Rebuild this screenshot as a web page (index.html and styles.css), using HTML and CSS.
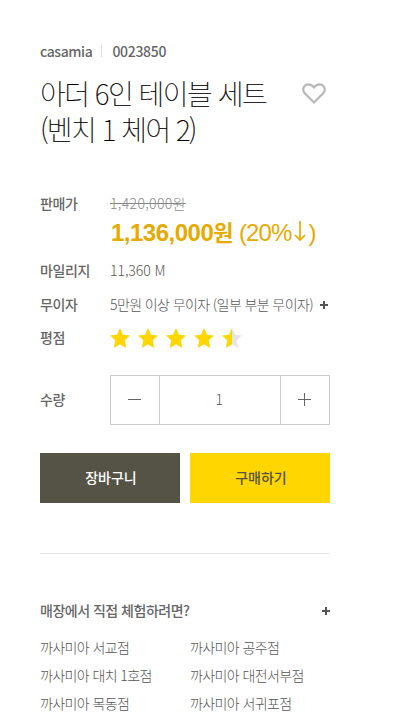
FILE: index.html
```html
<!DOCTYPE html>
<html lang="ko">
<head>
<meta charset="utf-8">
<title>casamia</title>
<link rel="stylesheet" href="styles.css">
</head>
<body>
<main class="product">
  <div class="meta"><span class="brand">casamia</span><span class="code">0023850</span></div>
  <header class="head">
    <h1>아더 6인 테이블 세트<br>(벤치 1 체어 2)</h1>
    <svg class="heart" width="24" height="22" viewBox="0 0 24 22"><path d="M12 19.500 3 10.600C-.6 6.600 1.900 1.300 6.500 1.300c2.300 0 4.100 1.200 5.500 3.100 1.400-1.900 3.200-3.100 5.500-3.100 4.600 0 7.100 5.300 3.500 9.300Z"/></svg>
  </header>
  <dl class="info">
    <div class="row price"><dt>판매가</dt><dd><del>1,420,000원</del><p class="sale"><b>1,136,000<span class="won">원</span></b> <span class="rate">(20%</span><svg width="12" height="22" viewBox="0 0 12 22"><path d="M6 1v19M1 15l5 5 5-5"/></svg><span class="rate">)</span></p></dd></div>
    <div class="row mileage"><dt>마일리지</dt><dd>11,360 M</dd></div>
    <div class="row free"><dt>무이자</dt><dd><span class="terms">5만원 이상 무이자 (일부 부분 무이자)</span><i class="plus"></i></dd></div>
    <div class="row rating"><dt>평점</dt><dd class="stars">
      <svg viewBox="0 0 20 20"><path d="m10 0 3 6.700 7 .7-5.200 4.900L16.200 20 10 16.200 3.800 20l1.400-7.700L0 7.400l7-.7z"/></svg>
      <svg viewBox="0 0 20 20"><path d="m10 0 3 6.700 7 .7-5.200 4.900L16.200 20 10 16.200 3.800 20l1.400-7.700L0 7.400l7-.7z"/></svg>
      <svg viewBox="0 0 20 20"><path d="m10 0 3 6.700 7 .7-5.200 4.900L16.200 20 10 16.200 3.800 20l1.400-7.700L0 7.400l7-.7z"/></svg>
      <svg viewBox="0 0 20 20"><path d="m10 0 3 6.700 7 .7-5.200 4.900L16.200 20 10 16.200 3.800 20l1.400-7.700L0 7.400l7-.7z"/></svg>
      <svg viewBox="0 0 20 20"><path class="off" d="m10 0 3 6.700 7 .7-5.200 4.900L16.200 20 10 16.200z"/><path d="M10 0v16.200L3.800 20l1.400-7.700L0 7.400l7-.7z"/></svg>
    </dd></div>
    <div class="row amount"><dt>수량</dt><dd class="stepper"><span class="step minus"></span><span class="count">1</span><span class="step add"></span></dd></div>
  </dl>
  <div class="buttons"><button class="cart">장바구니</button><button class="buy">구매하기</button></div>
  <section class="stores">
    <h2><span>매장에서 직접 체험하려면?</span><i class="plus"></i></h2>
    <ul>
      <li>까사미아 서교점</li><li>까사미아 공주점</li>
      <li>까사미아 대치 1호점</li><li>까사미아 대전서부점</li>
      <li>까사미아 목동점</li><li>까사미아 서귀포점</li>
    </ul>
  </section>
</main>
</body>
</html>
```
FILE: styles.css
```css
* { box-sizing: border-box; margin: 0; padding: 0; }
body { background: #fff; color: #555; font: 300 14px/20px "Noto Sans CJK KR", sans-serif; letter-spacing: -.6px; overflow: hidden; height: 728px; }
.product { width: 290px; margin-left: 40px; padding-top: 41px; }
.meta { display: flex; align-items: center; height: 20px; font-weight: 500; letter-spacing: -.3px; color: #666; }
.brand { letter-spacing: -.4px; }
.code { margin-left: 9px; padding-left: 10px; border-left: 1px solid #ddd; line-height: 12px; }
.head { display: flex; justify-content: space-between; margin-top: 14px; height: 72px; }
h1 { font-size: 28px; line-height: 36px; font-weight: 100; letter-spacing: -1.5px; color: #000; -webkit-text-stroke: .2px #000; white-space: nowrap; }
.heart { margin: 8px 4px 0 0; fill: none; stroke: #b8b8b8; stroke-width: 2.2; }
.row { display: flex; white-space: nowrap; }
dt { width: 70px; flex: none; font-weight: 500; color: #666; letter-spacing: -.4px; }
.price { margin-top: 46px; height: 67px; }
del { display: block; color: #888; letter-spacing: .35px; }
.sale { display: flex; align-items: baseline; height: 38px; padding: 1px 0 0 1px; font: 24px/38px "Liberation Sans", "Noto Sans CJK KR", sans-serif; letter-spacing: -.5px; color: #e6aa00; }
.sale b { margin-right: 6px; }
.won { font-size: 22px; line-height: 1; }
.rate { letter-spacing: -.9px; }
.sale svg { flex: none; position: relative; top: 1px; fill: none; stroke: #e6aa00; stroke-width: 1.7; margin: 0 2px 0 3px; }
.mileage { height: 34px; }
.mileage dd { letter-spacing: -.05px; }
.free { height: 33px; }
.free dd { display: flex; align-items: center; height: 20px; }
.plus { position: relative; display: block; width: 8px; height: 8px; background: linear-gradient(#555, #555) center / 8px 2px no-repeat, linear-gradient(#555, #555) center / 2px 8px no-repeat; }
.terms { width: 203px; }
.terms + .plus { margin: 1px 0 0 7px; }
.rating { height: 48px; }
.stars { display: flex; gap: 8px; padding-top: 1px; }
.stars svg { width: 20px; height: 20px; fill: #ffd600; }
.stars .off { fill: #e5e5e5; }
.amount { height: 50px; align-items: center; }
.amount dt { margin-top: -2px; }
.stepper { display: flex; width: 220px; height: 50px; border: 1px solid #ccc; }
.step { width: 48px; background: linear-gradient(#666, #666) 17px 23px / 13px 1px no-repeat; }
.add { background: linear-gradient(#666, #666) 17px 23px / 13px 1px no-repeat, linear-gradient(#666, #666) 23px 17px / 1px 13px no-repeat; }
.count { flex: 1; border: solid #ccc; border-width: 0 1px; text-align: center; line-height: 47px; padding-right: 2px; }
.buttons { display: flex; gap: 10px; margin-top: 28px; }
button { width: 140px; height: 50px; border: 0; padding: 0 0 2px 2px; font: 500 14px/20px "Noto Sans CJK KR", sans-serif; letter-spacing: 0; }
.cart { background: #555346; color: #fff; }
.buy { background: #ffd600; color: #555346; }
.stores { margin-top: 50px; border-top: 1px solid #e5e5e5; padding-top: 46px; }
h2 { display: flex; align-items: center; justify-content: space-between; font-size: 14px; line-height: 20px; font-weight: 500; letter-spacing: -.5px; color: #666; }
h2 .plus { margin-top: 2px; }
ul { display: grid; grid-template-columns: 150px 140px; margin-top: 13px; list-style: none; line-height: 28px; white-space: nowrap; }
```
